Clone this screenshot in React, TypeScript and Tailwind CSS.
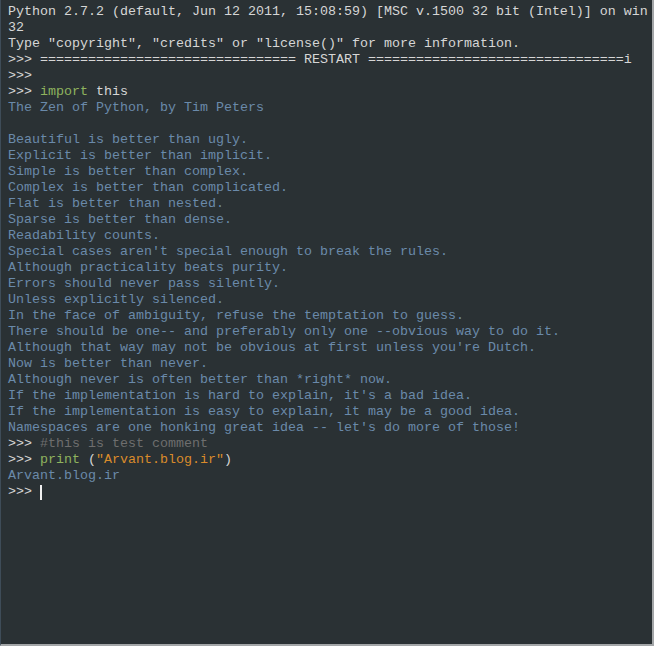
import React from "react";

const zen = [
  "Beautiful is better than ugly.",
  "Explicit is better than implicit.",
  "Simple is better than complex.",
  "Complex is better than complicated.",
  "Flat is better than nested.",
  "Sparse is better than dense.",
  "Readability counts.",
  "Special cases aren't special enough to break the rules.",
  "Although practicality beats purity.",
  "Errors should never pass silently.",
  "Unless explicitly silenced.",
  "In the face of ambiguity, refuse the temptation to guess.",
  "There should be one-- and preferably only one --obvious way to do it.",
  "Although that way may not be obvious at first unless you're Dutch.",
  "Now is better than never.",
  "Although never is often better than *right* now.",
  "If the implementation is hard to explain, it's a bad idea.",
  "If the implementation is easy to explain, it may be a good idea.",
  "Namespaces are one honking great idea -- let's do more of those!",
];

const eq = "================================";

export default function App() {
  return (
    <div className="w-[654px] h-[666px] bg-white">
      <div className="w-[654px] h-[646px] bg-[#2a3134] border-l border-l-[#3e4c58] border-r-2 border-r-[#a3a6a8] border-b-2 border-b-[#a3a6a8] pl-[7px] pt-[4px] text-[13.33px] leading-[16px] text-[#d6d6d6] whitespace-pre" style={{ fontFamily: '"Liberation Mono", "Courier New", monospace' }}>
        <div>Python 2.7.2 (default, Jun 12 2011, 15:08:59) [MSC v.1500 32 bit (Intel)] on win</div>
        <div>32</div>
        <div>Type "copyright", "credits" or "license()" for more information.</div>
        <div>{">>> " + eq + " RESTART " + eq + "i"}</div>
        <div>{">>> "}</div>
        <div>
          {">>> "}
          <span className="text-[#8fb35e]">import</span> this
        </div>
        <div className="text-[#6a8aaa]">The Zen of Python, by Tim Peters</div>
        <div>&nbsp;</div>
        {zen.map((l) => (
          <div key={l} className="text-[#6a8aaa]">{l}</div>
        ))}
        <div>
          {">>> "}
          <span className="text-[#6e6e6e]">#this is test comment</span>
        </div>
        <div>
          {">>> "}
          <span className="text-[#8fb35e]">print</span> (<span className="text-[#d98b2b]">"Arvant.blog.ir"</span>)
        </div>
        <div className="text-[#6a8aaa]">Arvant.blog.ir</div>
        <div className="flex items-center">
          <span>{">>> "}</span>
          <span className="inline-block w-[2px] h-[15px] bg-[#f0f0f0]" />
        </div>
      </div>
    </div>
  );
}
